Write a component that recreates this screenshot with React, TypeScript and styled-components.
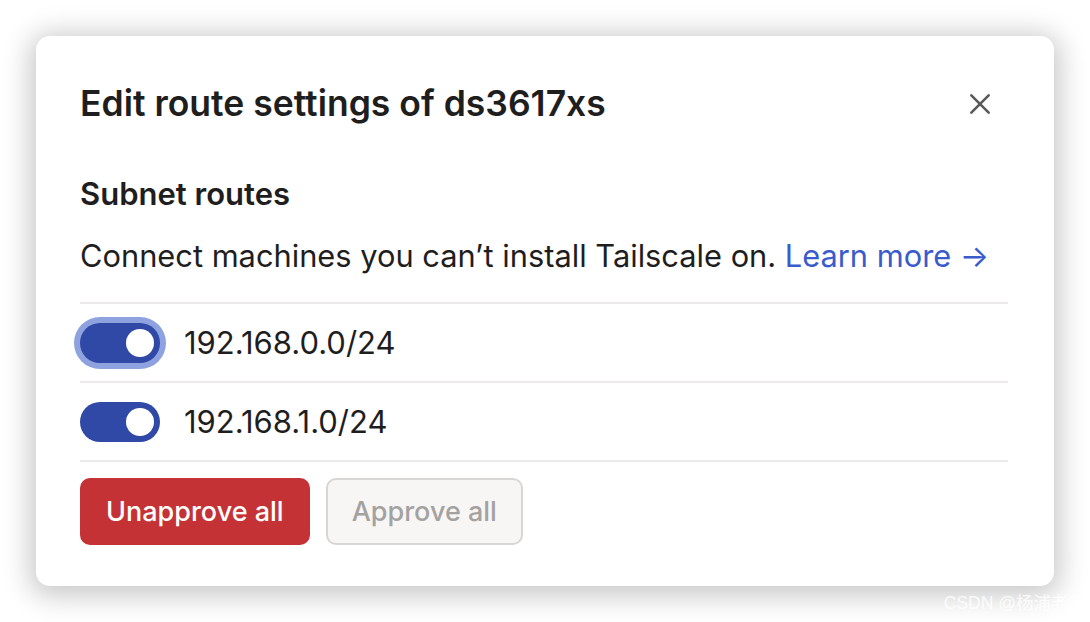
import React from 'react';
import styled, {createGlobalStyle} from 'styled-components';

const GlobalStyle = createGlobalStyle`
	html, body {
		margin: 0;
		padding: 0;
		background: #ffffff;
		font-family: Inter, "Noto Sans", "Liberation Sans", sans-serif;
		color: #1f1e1e;
	}
`;

const Page = styled.div`
	width: 1090px;
	height: 622px;
	box-sizing: border-box;
	padding: 36px;
	position: relative;
	overflow: hidden;
	background: #ffffff;
`;

const Dialog = styled.div`
	width: 1018px;
	height: 550px;
	box-sizing: border-box;
	background: #ffffff;
	border-radius: 14px;
	box-shadow: 0 4px 28px 6px rgba(0, 0, 0, 0.22);
	padding: 48px 46px 0 44px;
	display: flex;
	flex-direction: column;
`;

const Header = styled.div`
	display: flex;
	align-items: center;
	justify-content: space-between;
	height: 40px;
`;

const Title = styled.h1`
	margin: 0;
	font-size: 35.5px;
	line-height: 40px;
	font-weight: 600;
	color: #1f1e1e;
`;

const CloseButton = styled.button`
	border: none;
	background: transparent;
	padding: 0;
	width: 40px;
	height: 40px;
	margin-right: 8px;
	display: flex;
	align-items: center;
	justify-content: center;
	color: #5a5958;
	cursor: pointer;
`;

const SectionTitle = styled.h2`
	margin: 54px 0 0 0;
	font-size: 31px;
	line-height: 32px;
	font-weight: 600;
	color: #1f1e1e;
`;

const Description = styled.p`
	margin: 29px 0 0 0;
	font-size: 30.8px;
	line-height: 34px;
	color: #1f1e1e;
`;

const Link = styled.a`
	color: #3a5bcb;
	text-decoration: none;
`;

const RouteList = styled.div`
	margin-top: 29px;
	border-top: 2px solid #eceaea;
`;

const RouteRow = styled.div`
	display: flex;
	align-items: center;
	gap: 24px;
	height: 77px;
	border-bottom: 2px solid #eceaea;
	font-size: 31px;
	color: #1f1e1e;
`;

const Toggle = styled.span<{$focused?: boolean}>`
	position: relative;
	width: 80px;
	height: 40px;
	border-radius: 20px;
	background: #3048a6;
	box-shadow: ${p => (p.$focused ? '0 0 0 6px #8ea2df' : 'none')};
	flex-shrink: 0;

	&::after {
		content: '';
		position: absolute;
		top: 6px;
		right: 6px;
		width: 28px;
		height: 28px;
		border-radius: 50%;
		background: #ffffff;
	}
`;

const Actions = styled.div`
	display: flex;
	gap: 16px;
	margin-top: 16px;
`;

const Button = styled.button<{$variant: 'danger' | 'disabled'}>`
	height: 67px;
	box-sizing: border-box;
	padding: 0 24px;
	border-radius: 10px;
	font-family: inherit;
	font-size: 27px;
	font-weight: 500;
	border: 2px solid ${p => (p.$variant === 'danger' ? '#c43235' : '#d8d6d4')};
	background: ${p => (p.$variant === 'danger' ? '#c43235' : '#f7f6f5')};
	color: ${p => (p.$variant === 'danger' ? '#ffffff' : '#a4a2a1')};
`;

const Watermark = styled.div`
	position: absolute;
	right: 4px;
	bottom: 8px;
	font-size: 17.5px;
	color: rgba(255, 255, 255, 0.8);
	font-family: "Liberation Sans", "Noto Sans CJK SC", sans-serif;
`;

const CloseIcon = () => (
	<svg width="26" height="26" viewBox="0 0 24 24" fill="none" stroke="currentColor" strokeWidth="2.4" strokeLinecap="round">
		<path d="M4 4 L20 20 M20 4 L4 20" />
	</svg>
);

const routes = [
	{cidr: '192.168.0.0/24', focused: true},
	{cidr: '192.168.1.0/24', focused: false},
];

export default function App() {
	return (
		<>
			<GlobalStyle />
			<Page>
				<Dialog>
					<Header>
						<Title>Edit route settings of ds3617xs</Title>
						<CloseButton aria-label="Close">
							<CloseIcon />
						</CloseButton>
					</Header>
					<SectionTitle>Subnet routes</SectionTitle>
					<Description>
						Connect machines you can’t install Tailscale on. <Link href="#">Learn more →</Link>
					</Description>
					<RouteList>
						{routes.map(r => (
							<RouteRow key={r.cidr}>
								<Toggle $focused={r.focused} />
								{r.cidr}
							</RouteRow>
						))}
					</RouteList>
					<Actions>
						<Button $variant="danger">Unapprove all</Button>
						<Button $variant="disabled">Approve all</Button>
					</Actions>
				</Dialog>
				<Watermark>CSDN @杨浦老苏</Watermark>
			</Page>
		</>
	);
}
